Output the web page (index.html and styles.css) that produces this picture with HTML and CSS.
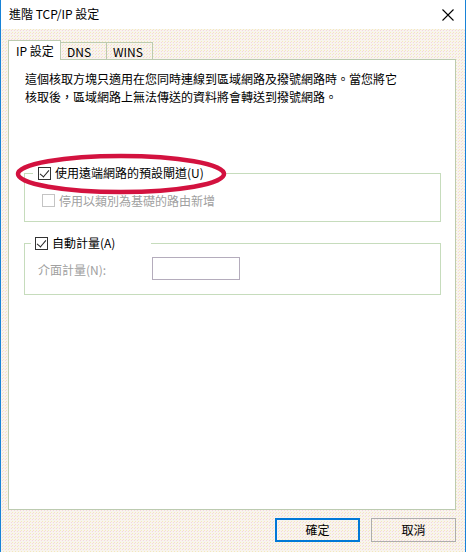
FILE: index.html
```html
<!DOCTYPE html>
<html lang="zh-Hant">
<head>
<meta charset="utf-8">
<title>進階 TCP/IP 設定</title>
<link rel="stylesheet" href="styles.css">
</head>
<body>
<div class="window">
  <div class="titlebar">
    <span class="title">進階 TCP/IP 設定</span>
    <svg class="close" width="12" height="12" viewBox="0 0 12 12"><path d="M0.5 0.5 L11.5 11.5 M11.5 0.5 L0.5 11.5" stroke="#000" stroke-width="1.1" fill="none"/></svg>
  </div>
  <div class="client">
    <div class="tabs">
      <div class="tab active">IP 設定</div>
      <div class="tab">DNS</div>
      <div class="tab">WINS</div>
    </div>
    <div class="panel">
      <p class="desc">這個核取方塊只適用在您同時連線到區域網路及撥號網路時。當您將它<br>核取後，區域網路上無法傳送的資料將會轉送到撥號網路。</p>
      <fieldset class="group g1">
        <legend class="legend l1"><span class="cb checked"></span><span>使用遠端網路的預設閘道(U)</span></legend>
        <div class="row sub"><span class="cb disabled"></span><span class="dis">停用以類別為基礎的路由新增</span></div>
      </fieldset>
      <fieldset class="group g2">
        <legend class="legend l2"><span class="cb checked"></span><span>自動計量(A)</span></legend>
        <div class="row metric"><span class="dis mlabel">介面計量(N):</span><span class="input"></span></div>
      </fieldset>
    </div>
    <div class="buttons">
      <div class="btn default">確定</div>
      <div class="btn">取消</div>
    </div>
  </div>
  <svg class="ellipse" width="214" height="44" viewBox="0 0 214 44"><ellipse cx="107" cy="22" rx="103" ry="18" fill="none" stroke="#d3123f" stroke-width="4.5"/></svg>
</div>
</body>
</html>
```
FILE: styles.css
```css
html, body {
  margin: 0;
  padding: 0;
}
body {
  width: 466px;
  height: 552px;
  overflow: hidden;
  font-family: "Noto Sans CJK TC", "Noto Sans", sans-serif;
  font-size: 12px;
  color: #000;
}
.window {
  position: relative;
  width: 466px;
  height: 552px;
  box-sizing: border-box;
  border-left: 1px solid #1883d7;
  border-right: 1px solid #1883d7;
  display: flex;
  flex-direction: column;
  background: #f8f4ee;
}
.titlebar {
  height: 29px;
  background: #fff;
  display: flex;
  align-items: center;
  justify-content: space-between;
  padding: 0 11px 0 8px;
}
.title {
  font-size: 12px;
  line-height: 16px;
  margin-top: -1px;
}
.close {
  margin-top: 0px;
}
.client {
  flex: 1;
  display: flex;
  flex-direction: column;
  padding: 11px 9px 0 7px;
  background-color: #f8f4ee;
  background-image: radial-gradient(circle, rgba(240,190,210,0.55) 0.6px, transparent 0.9px), radial-gradient(circle, rgba(240,225,150,0.55) 0.6px, transparent 0.9px);
  background-size: 3px 3px, 3px 3px;
  background-position: 0 0, 1px 2px;
}
.tabs {
  display: flex;
  align-items: flex-end;
  height: 20px;
  position: relative;
  z-index: 1;
  margin-bottom: -1px;
}
.tab {
  box-sizing: border-box;
  height: 18px;
  border: 1px solid #bccbb0;
  border-bottom: none;
  padding: 0 6px;
  line-height: 17px;
  margin-left: -1px;
  background: transparent;
}
.tab:nth-child(2) { width: 47px; }
.tab:nth-child(3) { width: 47px; }
.tab.active {
  height: 20px;
  width: 53px;
  margin-left: 0;
  background: #fff;
  padding-left: 7px;
  line-height: 19px;
  border-color: #bccbb0;
}
.panel {
  box-sizing: border-box;
  height: 451px;
  background: #fff;
  border: 1px solid #bccbb0;
  padding: 0 14px 0 15px;
  display: flex;
  flex-direction: column;
}
.desc {
  margin: 10px 0 0 1px;
  line-height: 18px;
}
.group {
  margin: 0;
  padding: 0;
  border: 1px solid #c6dcbc;
  min-width: 0;
}
.g1 {
  margin-top: 59px;
  height: 57px;
  box-sizing: border-box;
}
.g2 {
  margin-top: 13px;
  height: 60px;
  box-sizing: border-box;
}
.legend {
  display: flex;
  align-items: center;
  padding: 0 0 0 4px;
  line-height: 16px;
  height: 16px;
}
.l1 { margin-left: 8px; padding-left: 5px; width: 185px; }
.l2 { margin-left: 6px; padding-left: 4px; width: 116px; }
.cb {
  box-sizing: border-box;
  width: 13px;
  height: 13px;
  border: 1px solid #333;
  background: #fff;
  margin-right: 4px;
  flex: none;
  position: relative;
}
.cb.checked::after {
  content: "";
  position: absolute;
  left: 3px;
  top: 0px;
  width: 4px;
  height: 8px;
  border-right: 1.3px solid #222;
  border-bottom: 1.3px solid #222;
  transform: rotate(40deg);
}
.cb.disabled {
  border-color: #c4c4c4;
}
.row {
  display: flex;
  align-items: center;
}
.sub {
  margin-left: 17px;
  margin-top: 11px;
}
.dis {
  color: #a0a0a0;
}
.metric {
  margin-left: 13px;
  margin-top: 6px;
}
.mlabel {
  width: 114px;
  margin-top: 2px;
}
.input {
  box-sizing: border-box;
  width: 88px;
  height: 23px;
  border: 1px solid #b4acbc;
  background: #fff;
}
.buttons {
  display: flex;
  justify-content: flex-end;
  gap: 11px;
  margin-top: 8px;
}
.btn {
  box-sizing: border-box;
  width: 85px;
  height: 24px;
  border: 1px solid #adadad;
  display: flex;
  align-items: center;
  justify-content: center;
  line-height: 16px;
}
.btn.default {
  border: 2px solid #0078d7;
}
.ellipse {
  position: absolute;
  left: 13px;
  top: 152px;
}
```
